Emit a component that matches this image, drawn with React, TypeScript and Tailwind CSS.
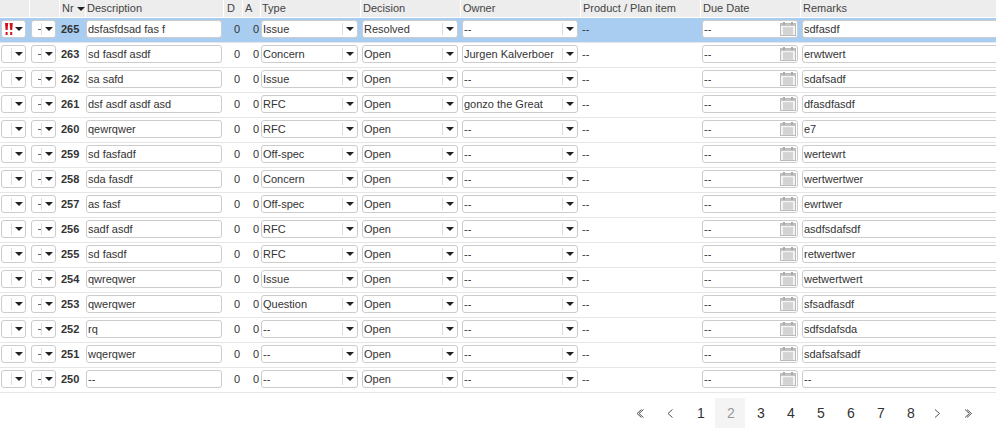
const COLS = 'grid grid-cols-[30px_30px_26px_138px_19px_18px_100px_100px_120px_120px_100px_195px]';

type Row = { nr: number; desc: string; type: string; decision: string; owner: string; due: string; remarks: string };

const rows: Row[] = [
  { nr: 265, desc: 'dsfasfdsad fas f', type: 'Issue', decision: 'Resolved', owner: '--', due: '--', remarks: 'sdfasdf' },
  { nr: 263, desc: 'sd fasdf asdf', type: 'Concern', decision: 'Open', owner: 'Jurgen Kalverboer', due: '--', remarks: 'erwtwert' },
  { nr: 262, desc: 'sa safd', type: 'Issue', decision: 'Open', owner: '--', due: '--', remarks: 'sdafsadf' },
  { nr: 261, desc: 'dsf asdf asdf asd', type: 'RFC', decision: 'Open', owner: 'gonzo the Great', due: '--', remarks: 'dfasdfasdf' },
  { nr: 260, desc: 'qewrqwer', type: 'RFC', decision: 'Open', owner: '--', due: '--', remarks: 'e7' },
  { nr: 259, desc: 'sd fasfadf', type: 'Off-spec', decision: 'Open', owner: '--', due: '--', remarks: 'wertewrt' },
  { nr: 258, desc: 'sda fasdf', type: 'Concern', decision: 'Open', owner: '--', due: '--', remarks: 'wertwertwer' },
  { nr: 257, desc: 'as fasf', type: 'Off-spec', decision: 'Open', owner: '--', due: '--', remarks: 'ewrtwer' },
  { nr: 256, desc: 'sadf asdf', type: 'RFC', decision: 'Open', owner: '--', due: '--', remarks: 'asdfsdafsdf' },
  { nr: 255, desc: 'sd fasdf', type: 'RFC', decision: 'Open', owner: '--', due: '--', remarks: 'retwertwer' },
  { nr: 254, desc: 'qwreqwer', type: 'Issue', decision: 'Open', owner: '--', due: '--', remarks: 'wetwertwert' },
  { nr: 253, desc: 'qwerqwer', type: 'Question', decision: 'Open', owner: '--', due: '--', remarks: 'sfsadfasdf' },
  { nr: 252, desc: 'rq', type: '--', decision: 'Open', owner: '--', due: '--', remarks: 'sdfsdafsda' },
  { nr: 251, desc: 'wqerqwer', type: '--', decision: 'Open', owner: '--', due: '--', remarks: 'sdafsafsadf' },
  { nr: 250, desc: '--', type: '--', decision: 'Open', owner: '--', due: '--', remarks: '--' },
];

function Caret() {
  return <span className="block h-0 w-0 border-x-[4px] border-t-[4px] border-x-transparent border-t-[#222]" />;
}

function Select({ value }: { value: string }) {
  return (
    <div className="flex h-[18px] items-center rounded-[3px] border border-[#ccc] bg-white pl-[1px]">
      <span className="flex-1 truncate">{value}</span>
      <span className="h-[12px] w-px bg-[#ddd]" />
      <span className="flex w-[14px] justify-center">
        <Caret />
      </span>
    </div>
  );
}

function Flags() {
  return (
    <svg width="8" height="12" viewBox="0 0 8 12" className="ml-[3px]">
      <path d="M0 0h3.2l-0.6 7h-2zM4.6 0h3.2l-0.6 7h-2z" fill="#d0101c" />
      <rect x="0.6" y="9" width="2" height="3" fill="#d0101c" />
      <rect x="5.2" y="9" width="2" height="3" fill="#d0101c" />
    </svg>
  );
}

function IconSelect({ flagged }: { flagged?: boolean }) {
  return (
    <div className="flex h-[18px] w-[25px] items-center rounded-[3px] border border-[#ccc] bg-white">
      {flagged ? <Flags /> : <span className="ml-[9px] h-[12px] w-px bg-[#ddd]" />}
      <span className="flex flex-1 justify-center">
        <Caret />
      </span>
    </div>
  );
}

function DashSelect() {
  return (
    <div className="flex h-[18px] w-[25px] items-center rounded-[3px] border border-[#ccc] bg-white pl-[6px]">
      <span className="h-px w-[3px] bg-[#666]" />
      <span className="h-[12px] w-px bg-[#ddd]" />
      <span className="flex flex-1 justify-center">
        <Caret />
      </span>
    </div>
  );
}

function TextBox({ value }: { value: string }) {
  return <div className="h-[18px] truncate rounded-[3px] border border-[#ccc] bg-white pl-[1px] leading-[16px]">{value}</div>;
}

function CalendarIcon() {
  return (
    <svg width="16" height="14" viewBox="0 0 16 14" className="mr-[1px]">
      <rect x="0.5" y="1.5" width="15" height="12" fill="#f4f4f4" stroke="#bbb" />
      <rect x="1" y="2" width="14" height="2" fill="#c4c4c4" />
      <rect x="3" y="0" width="2" height="3" fill="#aaa" />
      <rect x="11" y="0" width="2" height="3" fill="#aaa" />
      <path d="M3 6h10M3 8h10M3 10h10M3 12h10M4 5.5v7M6 5.5v7M8 5.5v7M10 5.5v7M12 5.5v7" stroke="#c8c8c8" strokeWidth="1" />
    </svg>
  );
}

function DateBox({ value }: { value: string }) {
  return (
    <div className="flex h-[18px] items-center rounded-[3px] border border-[#ccc] bg-white pl-[1px]">
      <span className="flex-1">{value}</span>
      <CalendarIcon />
    </div>
  );
}

const headers: { label?: string; sort?: boolean; pad?: string }[] = [
  {},
  {},
  { label: 'Nr', sort: true },
  { label: 'Description', pad: 'pl-[1px]' },
  { label: 'D', pad: 'pl-[3px]' },
  { label: 'A' },
  { label: 'Type', pad: 'pl-[1px]' },
  { label: 'Decision' },
  { label: 'Owner' },
  { label: 'Product / Plan item' },
  { label: 'Due Date' },
  { label: 'Remarks' },
];

function Chevron({ dir, double }: { dir: 'left' | 'right'; double?: boolean }) {
  const d = dir === 'left' ? 'M5.5 0.5L1 4.5L5.5 8.5' : 'M1 0.5L5.5 4.5L1 8.5';
  return (
    <svg width={double ? 8 : 7} height="9" viewBox={double ? '0 0 8 9' : '0 0 7 9'} fill="none" stroke="#555" strokeWidth="1">
      <path d={d} />
      {double && <path d={d} transform="translate(2 0)" />}
    </svg>
  );
}

const pageCell = 'flex h-[30px] items-center justify-center';
const pages = [1, 2, 3, 4, 5, 6, 7, 8];

export default function App() {
  return (
    <div className="h-[429px] w-[999px] overflow-hidden bg-white font-['Liberation_Sans',Arial,sans-serif] text-[11px] text-[#333]">
      <div className="w-[996px] overflow-hidden">
        <div className={`${COLS} h-[18px] border-b border-white bg-[#ededed] text-[#444]`}>
          {headers.map((h, i) => (
            <div key={i} className={`flex items-center border-r border-white last:border-r-0 ${h.pad ?? 'pl-[2px]'}`}>
              {h.label && <span>{h.label}</span>}
              {h.sort && <span className="ml-[3px]"><Caret /></span>}
            </div>
          ))}
        </div>
        {rows.map((r, i) => (
          <div key={r.nr} className={`${COLS} h-[25px] items-start border-b border-[#e6e6e6] pt-[2px] leading-[18px] ${i === 0 ? 'bg-[#a8cdf0]' : ''}`}>
            <div className="pl-[1px]"><IconSelect flagged={i === 0} /></div>
            <div className="pl-[1px]"><DashSelect /></div>
            <div className="pl-[1px] font-bold">{r.nr}</div>
            <div className="pr-[2px]"><TextBox value={r.desc} /></div>
            <div className="pr-[3px] text-right">0</div>
            <div className="pr-[2px] text-right">0</div>
            <div className="pr-[3px]"><Select value={r.type} /></div>
            <div className="pl-[1px] pr-[3px]"><Select value={r.decision} /></div>
            <div className="pl-[1px] pr-[3px]"><Select value={r.owner} /></div>
            <div className="pl-[1px]">--</div>
            <div className="pl-[1px] pr-[3px]"><DateBox value={r.due} /></div>
            <div className="w-[205px] pl-[1px]"><TextBox value={r.remarks} /></div>
          </div>
        ))}
      </div>
      <div className="mt-[5px] flex w-[987px] justify-end text-[14px] text-[#333]">
        <span className={`${pageCell} mr-px w-[30px]`}><Chevron dir="left" double /></span>
        <span className={`${pageCell} w-[29px]`}><Chevron dir="left" /></span>
        {pages.map((p) => (
          <span key={p} className={`${pageCell} w-[30px] pl-[2px] ${p === 2 ? 'bg-[#f4f4f4] text-[#999]' : ''}`}>{p}</span>
        ))}
        <span className={`${pageCell} w-[24px]`}><Chevron dir="right" /></span>
        <span className={`${pageCell} w-[38px]`}><Chevron dir="right" double /></span>
      </div>
    </div>
  );
}
